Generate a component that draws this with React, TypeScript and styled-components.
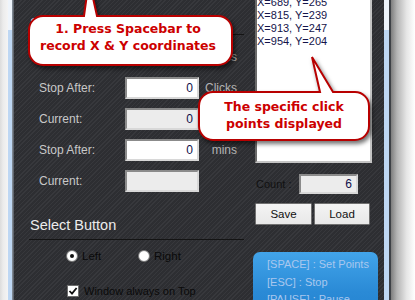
import React from "react";
import styled, { createGlobalStyle } from "styled-components";

const GlobalStyle = createGlobalStyle`
  html, body { margin: 0; padding: 0; background: #ffffff; }
  body { font-family: "Liberation Sans", Arial, sans-serif; }
  #root { width: 415px; height: 300px; overflow: hidden; }
`;

const Screen = styled.div`
  display: flex;
  width: 415px;
  height: 300px;
  overflow: hidden;
  background: #ffffff;
`;

const FrameLeft = styled.div`
  flex: 0 0 14px;
  background:
    linear-gradient(to bottom, #eef4fb 0, #eef4fb 30px, #bed7f3 30px) 8px 0 / 4px 100% no-repeat,
    linear-gradient(to right, #dcdcdc, #ececec 40%, #f4f4f4) 0 0 / 8px 100% no-repeat,
    linear-gradient(to right, #8d97a2, #50555c) 12px 0 / 2px 100% no-repeat;
`;

const FrameRight = styled.div`
  flex: 0 0 7px;
  background:
    linear-gradient(to bottom, #eef4fb 0, #eef4fb 30px, #bed7f3 30px) 0 0 / 5px 100% no-repeat,
    #3e4146;
`;

const Shadow = styled.div`
  flex: 1 1 auto;
  background: linear-gradient(to right, #7e7e7e, #b4b4b4 25%, #e6e6e6 65%, #ffffff);
`;

const Panel = styled.div`
  position: relative;
  flex: 0 0 370px;
  display: grid;
  grid-template-columns: 239px 125px;
  align-items: start;
  padding-right: 6px;
  box-sizing: border-box;
  background-color: #303135;
  background-image: repeating-linear-gradient(
    -45deg,
    rgba(255, 255, 255, 0.035) 0px,
    rgba(255, 255, 255, 0.035) 1px,
    rgba(0, 0, 0, 0.06) 1px,
    rgba(0, 0, 0, 0.06) 3px
  );
`;

/* ---------- left column ---------- */

const LeftCol = styled.div`
  display: flex;
  flex-direction: column;
  padding-top: 15px;
`;

const GroupTitle = styled.div<{ $mt: number; $pb: number }>`
  margin-top: ${(p) => p.$mt}px;
  margin-left: 15px;
  width: 214px;
  padding-left: 1px;
  padding-bottom: ${(p) => p.$pb}px;
  font-size: 14.5px;
  line-height: 16px;
  color: #ececec;
  border-bottom: 1px solid #141414;
`;

const Rows = styled.div`
  display: flex;
  flex-direction: column;
  gap: 9px;
  margin-top: 11px;
`;

const Row = styled.div`
  display: grid;
  grid-template-columns: 86px 74px 38px;
  align-items: center;
  height: 22px;
  padding-left: 25px;
`;

const FieldLabel = styled.span`
  font-size: 12px;
  color: #c8c8c8;
  white-space: nowrap;
`;

const Unit = styled.span`
  font-size: 12px;
  color: #b4b4b4;
  text-align: right;
`;

const ValueBox = styled.div<{ $readonly?: boolean; $h: number }>`
  box-sizing: border-box;
  height: ${(p) => p.$h}px;
  border: 2px solid;
  border-color: #8b8b8b #d8d8d8 #d8d8d8 #8b8b8b;
  background: ${(p) => (p.$readonly ? "#ececec" : "#ffffff")};
  padding-right: 4px;
  font-size: 12px;
  line-height: ${(p) => p.$h - 4}px;
  color: #10104a;
  text-align: right;
`;

const OptionRow = styled.div<{ $mt: number; $pl: number }>`
  display: flex;
  align-items: center;
  height: 12px;
  margin-top: ${(p) => p.$mt}px;
  padding-left: ${(p) => p.$pl}px;
`;

const RadioItem = styled.label<{ $w?: number }>`
  display: flex;
  align-items: center;
  gap: 4px;
  width: ${(p) => (p.$w ? `${p.$w}px` : "auto")};
  font-size: 11.5px;
  color: #0a0a0a;
`;

const RadioDot = styled.span<{ $checked?: boolean }>`
  box-sizing: border-box;
  width: 12px;
  height: 12px;
  border-radius: 50%;
  border: 1px solid #7e7e7e;
  background: radial-gradient(circle, #ffffff 55%, #e2e2e2);
  display: flex;
  align-items: center;
  justify-content: center;
  &::after {
    content: "";
    display: ${(p) => (p.$checked ? "block" : "none")};
    width: 4px;
    height: 4px;
    border-radius: 50%;
    background: #111111;
  }
`;

const CheckItem = styled.label`
  display: flex;
  align-items: center;
  gap: 5px;
  font-size: 11px;
  color: #0a0a0a;
  white-space: nowrap;
`;

const CheckBox = styled.span`
  box-sizing: border-box;
  width: 12px;
  height: 12px;
  border: 1px solid #6e6e6e;
  background: #ffffff;
  display: flex;
  align-items: center;
  justify-content: center;
`;

/* ---------- right column ---------- */

const RightCol = styled.div`
  display: flex;
  flex-direction: column;
`;

const PointList = styled.div`
  box-sizing: border-box;
  height: 171px;
  margin: -8px 6px 0 2px;
  border: 2px solid;
  border-color: #6a6a6a #c4c4c4 #c4c4c4 #6a6a6a;
  background: #ffffff;
  padding: 2px 0 0 0;
  font-size: 11px;
  line-height: 13px;
  color: #14144a;
`;

const CountRow = styled.div`
  display: grid;
  grid-template-columns: 43px 59px;
  align-items: center;
  height: 20px;
  margin-top: 11px;
  padding-left: 3px;
`;

const DarkLabel = styled.span`
  font-size: 11px;
  color: #111111;
  white-space: nowrap;
`;

const ButtonRow = styled.div`
  display: flex;
  gap: 2px;
  margin-top: 9px;
  padding-left: 2px;
`;

const Button = styled.button<{ $w: number }>`
  box-sizing: border-box;
  width: ${(p) => p.$w}px;
  height: 22px;
  margin: 0;
  padding: 0;
  border: 1px solid #707070;
  border-radius: 1px;
  background: linear-gradient(to bottom, #f4f4f4, #e8e8e8);
  font-family: "Liberation Sans", Arial, sans-serif;
  font-size: 11.5px;
  color: #111111;
`;

const InfoBox = styled.div`
  box-sizing: border-box;
  height: 80px;
  margin-top: 27px;
  padding: 4px 0 0 14px;
  border-radius: 7px 7px 0 0;
  background: linear-gradient(to bottom, #42a4ea, #2a8ad6 50%, #1f7ecb);
  font-size: 11px;
  line-height: 17.5px;
  color: #a9c7ee;
  white-space: nowrap;
`;

/* ---------- callouts ---------- */

const CalloutBox = styled.div<{ $x: number; $y: number; $w: number; $h: number }>`
  position: absolute;
  left: ${(p) => p.$x}px;
  top: ${(p) => p.$y}px;
  width: ${(p) => p.$w}px;
  height: ${(p) => p.$h}px;
`;

const CalloutShape = styled.svg`
  position: absolute;
  left: 0;
  top: 0;
  overflow: visible;
  filter: drop-shadow(2px 3px 2px rgba(0, 0, 0, 0.55));
`;

const CalloutText = styled.div<{ $pb: number; $pr: number }>`
  position: relative;
  box-sizing: border-box;
  height: 100%;
  display: flex;
  flex-direction: column;
  align-items: center;
  justify-content: center;
  padding-bottom: ${(p) => p.$pb}px;
  padding-right: ${(p) => p.$pr}px;
  font-family: "DejaVu Sans", "Liberation Sans", sans-serif;
  font-weight: bold;
  font-size: 12.5px;
  line-height: 16.5px;
  color: #cc0000;
  white-space: nowrap;
`;

type CalloutProps = {
  x: number;
  y: number;
  w: number;
  h: number;
  r: number;
  base: [number, number];
  tip: [number, number];
  pb: number;
  pr: number;
  lines: string[];
};

function calloutPath(w: number, h: number, r: number, base: [number, number], tip: [number, number]) {
  const x0 = 1;
  const y0 = 1;
  const x1 = w - 1;
  const y1 = h - 1;
  return [
    `M${x0 + r},${y0}`,
    `L${base[0]},${y0}`,
    `L${tip[0]},${tip[1]}`,
    `L${base[1]},${y0}`,
    `L${x1 - r},${y0}`,
    `A${r},${r} 0 0 1 ${x1},${y0 + r}`,
    `L${x1},${y1 - r}`,
    `A${r},${r} 0 0 1 ${x1 - r},${y1}`,
    `L${x0 + r},${y1}`,
    `A${r},${r} 0 0 1 ${x0},${y1 - r}`,
    `L${x0},${y0 + r}`,
    `A${r},${r} 0 0 1 ${x0 + r},${y0}`,
    "Z",
  ].join(" ");
}

function Callout({ x, y, w, h, r, base, tip, pb, pr, lines }: CalloutProps) {
  return (
    <CalloutBox $x={x} $y={y} $w={w} $h={h}>
      <CalloutShape width={w} height={h} viewBox={`0 0 ${w} ${h}`}>
        <path
          d={calloutPath(w, h, r, base, tip)}
          fill="#ffffff"
          stroke="#b80000"
          strokeWidth={2}
          strokeLinejoin="miter"
        />
      </CalloutShape>
      <CalloutText $pb={pb} $pr={pr}>
        {lines.map((l) => (
          <span key={l}>{l}</span>
        ))}
      </CalloutText>
    </CalloutBox>
  );
}

/* ---------- data ---------- */

type Field = { label: string; value?: string; unit?: string; readonly?: boolean; noBox?: boolean };

const fields: Field[] = [
  { label: "Interval:", unit: "secs", noBox: true },
  { label: "Stop After:", value: "0", unit: "Clicks" },
  { label: "Current:", readonly: true, value: "0" },
  { label: "Stop After:", value: "0", unit: "mins" },
  { label: "Current:", readonly: true },
];

const points = ["X=689, Y=265", "X=815, Y=239", "X=913, Y=247", "X=954, Y=204"];

const shortcuts = ["[SPACE] : Set Points", "[ESC] : Stop", "[PAUSE] : Pause"];

export default function App() {
  return (
    <>
      <GlobalStyle />
      <Screen>
        <FrameLeft />
        <Panel>
          <LeftCol>
            <GroupTitle $mt={0} $pb={3}>
              Stop Options
            </GroupTitle>
            <Rows>
              {fields.map((f, i) => (
                <Row key={i}>
                  <FieldLabel>{f.label}</FieldLabel>
                  {f.noBox ? (
                    <span />
                  ) : (
                    <ValueBox $h={22} $readonly={f.readonly}>
                      {f.value ?? ""}
                    </ValueBox>
                  )}
                  <Unit>{f.unit ?? ""}</Unit>
                </Row>
              ))}
            </Rows>
            <GroupTitle $mt={25} $pb={6}>
              Select Button
            </GroupTitle>
            <OptionRow $mt={10} $pl={52}>
              <RadioItem $w={72}>
                <RadioDot $checked />
                Left
              </RadioItem>
              <RadioItem>
                <RadioDot />
                Right
              </RadioItem>
            </OptionRow>
            <OptionRow $mt={23} $pl={53}>
              <CheckItem>
                <CheckBox>
                  <svg width="10" height="10" viewBox="0 0 10 10">
                    <path d="M1.5 5 L4 7.6 L8.6 2" fill="none" stroke="#111" strokeWidth="1.8" />
                  </svg>
                </CheckBox>
                Window always on Top
              </CheckItem>
            </OptionRow>
          </LeftCol>

          <RightCol>
            <PointList>
              {points.map((p) => (
                <div key={p}>{p}</div>
              ))}
            </PointList>
            <CountRow>
              <DarkLabel>Count :</DarkLabel>
              <ValueBox $h={20} $readonly>
                6
              </ValueBox>
            </CountRow>
            <ButtonRow>
              <Button $w={57}>Save</Button>
              <Button $w={56}>Load</Button>
            </ButtonRow>
            <InfoBox>
              {shortcuts.map((s) => (
                <div key={s}>{s}</div>
              ))}
            </InfoBox>
          </RightCol>

          <Callout
            x={14}
            y={15}
            w={205}
            h={51}
            r={14}
            base={[56, 69]}
            tip={[61, -35]}
            pb={6}
            pr={5}
            lines={["1. Press Spacebar to", "record X & Y coordinates"]}
          />
          <Callout
            x={184}
            y={91}
            w={172}
            h={50}
            r={14}
            base={[122, 135]}
            tip={[114, -34]}
            pb={1}
            pr={0}
            lines={["The specific click", "points displayed"]}
          />
        </Panel>
        <FrameRight />
        <Shadow />
      </Screen>
    </>
  );
}
